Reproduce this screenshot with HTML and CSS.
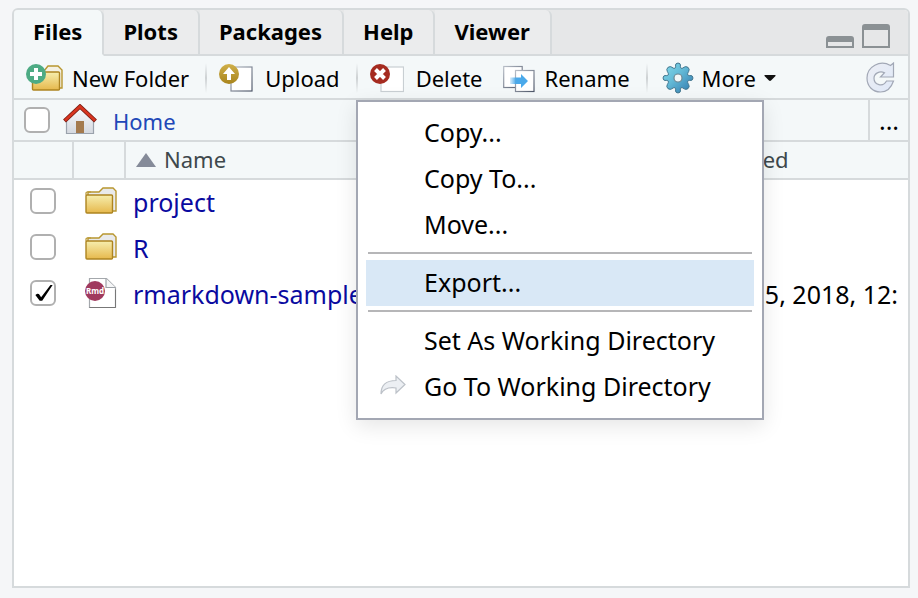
FILE: index.html
```html
<!DOCTYPE html>
<html lang="en">
<head>
<meta charset="utf-8">
<title>Files</title>
<link rel="stylesheet" href="styles.css">
</head>
<body>
<svg class="defs" aria-hidden="true">
  <defs>
    <linearGradient id="gold" x1="0" y1="0" x2="0" y2="1"><stop offset="0" stop-color="#f6eeae"/><stop offset="1" stop-color="#e6b84c"/></linearGradient>
    <linearGradient id="bronze" x1="0" y1="0" x2="0" y2="1"><stop offset="0" stop-color="#d0b04a"/><stop offset="1" stop-color="#a8841c"/></linearGradient>
    <linearGradient id="page" x1="0" y1="0" x2="1" y2="1"><stop offset="0" stop-color="#b9bfc8"/><stop offset="1" stop-color="#4d5668"/></linearGradient>
    <linearGradient id="blue" x1="0" y1="0" x2="1" y2="0"><stop offset="0" stop-color="#4aa9ea" stop-opacity=".2"/><stop offset=".35" stop-color="#4aa9ea"/></linearGradient>
    <linearGradient id="cog" x1="0" y1="0" x2="1" y2="1"><stop offset="0" stop-color="#85dcec"/><stop offset=".45" stop-color="#63b9d6"/><stop offset="1" stop-color="#2f77ad"/></linearGradient>
    <linearGradient id="wall" x1="0" y1="0" x2="0" y2="1"><stop offset="0" stop-color="#fafafc"/><stop offset="1" stop-color="#d5d9e0"/></linearGradient>
    <linearGradient id="ice" x1="0" y1="0" x2="1" y2="1"><stop offset="0" stop-color="#eceef4"/><stop offset="1" stop-color="#dfe8f8"/></linearGradient>
    <symbol id="folder" viewBox="0 0 32 28">
      <path d="M3 8V5h11l4-4h10l3 3v20h-4" fill="#e9eaec" stroke="#b8962f" stroke-width="1.4"/>
      <path d="M1.700 8.300Q1 8.300 1 7.500V6q0-1 1-1h4" fill="none" stroke="#b8962f" stroke-width="1.200"/>
      <rect x="1" y="8" width="26.500" height="18" rx="1" fill="url(#gold)" stroke="#ad8420" stroke-width="1.400"/>
    </symbol>
  </defs>
</svg>
<main class="panel">
  <nav class="tabs">
    <button class="tab active">Files</button>
    <button class="tab">Plots</button>
    <button class="tab">Packages</button>
    <button class="tab">Help</button>
    <button class="tab">Viewer</button>
    <span class="spacer"></span>
    <button class="window" aria-label="Minimize"><svg width="28" height="24" viewBox="0 0 28 24"><path d="M0 24V15q0-3 3-3h22q3 0 3 3v9zM2 18v4h24v-4z" fill="#8b9194" fill-rule="evenodd"/></svg></button>
    <button class="window" aria-label="Maximize"><svg width="28" height="24" viewBox="0 0 28 24"><path d="M0 24V3q0-3 3-3h22q3 0 3 3v21zM2 6v16h24V6z" fill="#8b9194" fill-rule="evenodd"/></svg></button>
  </nav>

  <div class="toolbar">
    <button class="tool new"><svg width="38" height="30" viewBox="0 0 38 30">
      <path d="M18 8l4-5h10l4 4v18h-5" fill="#f4f1e3" stroke="#b8962f" stroke-width="1.400"/>
      <rect x="6.500" y="9" width="27" height="18" rx="1" fill="url(#gold)" stroke="#ad8420" stroke-width="1.400"/>
      <circle cx="10" cy="11" r="10" fill="#4dab84"/><path d="M8 5h4v4h4v4h-4v4H8v-4H4V9h4z" fill="#fff"/></svg>New Folder</button>
    <span class="divider"></span>
    <button class="tool upload"><svg width="34" height="30" viewBox="0 0 34 30">
      <rect x="12" y="4" width="21" height="24" fill="#fff" stroke="url(#page)" stroke-width="1.200"/>
      <circle cx="10" cy="11" r="10" fill="url(#bronze)"/><path d="M10 4l6 7h-4v6H8v-6H4z" fill="#fff"/></svg>Upload</button>
    <span class="divider"></span>
    <button class="tool delete"><svg width="34" height="30" viewBox="0 0 34 30">
      <rect x="11" y="4" width="22.500" height="24.500" fill="#fff" stroke="#c9cfd3" stroke-width="1.200"/>
      <circle cx="10" cy="11" r="10" fill="#a52b20"/><path d="M5.500 6.500l9 9m0-9l-9 9" stroke="#fff" stroke-width="4"/></svg>Delete</button>
    <button class="tool rename"><svg width="32" height="30" viewBox="0 0 32 30">
      <rect x=".7" y="3.500" width="18.500" height="21" fill="#fff" stroke="url(#page)" stroke-width="1.200"/>
      <rect x="12.500" y="7.500" width="18.500" height="21" fill="#fff" stroke="url(#page)" stroke-width="1.200"/>
      <path d="M7 14.500h11V11l7 7-7 7v-4H7z" fill="url(#blue)"/></svg>Rename</button>
    <span class="divider"></span>
    <button class="tool more" aria-haspopup="menu" aria-expanded="true"><svg width="32" height="32" viewBox="0 0 32 32">
      <path d="M13 6.200C14.500 5 12.800 3.500 14 1.800Q16 .2 18 1.800C19.200 3.500 17.500 5 19 6.200C20.800 7 21 5.200 23.800 4.600Q26.600 4.800 27.200 7.400C26.800 10.800 25 10.800 25.800 13C27 14.500 28.500 12.800 30.200 14Q31.800 16 30.200 18C28.500 19.200 27 17.500 25.800 19C25 21.200 26.800 21.200 27.200 24.600Q26.600 27.200 23.800 27.400C21 26.800 20.800 25 19 25.800C17.500 27 19.200 28.500 18 30.200Q16 31.800 14 30.200C12.800 28.500 14.500 27 13 25.800C11.200 25 11 26.800 8.200 27.400Q5.400 27.200 4.800 24.600C5.200 21.200 7 21.200 6.200 19C5 17.500 3.500 19.200 1.800 18Q.2 16 1.800 14C3.500 12.800 5 14.500 6.200 13C7 10.800 5.200 10.800 4.800 7.400Q5.400 4.800 8.200 4.600C11 5.200 11.200 7 13 6.200Z" fill="url(#cog)" stroke="#42768e" stroke-width="1"/>
      <circle cx="16" cy="16" r="4" fill="#f2f7f8" stroke="#6c8793" stroke-width="1.200"/></svg>More<svg width="12" height="6" viewBox="0 0 12 6"><path d="M1 0h10q1 0 .5 1L7 5.500q-1 .8-2 0L.5 1Q0 0 1 0z" fill="#111"/></svg></button>
    <span class="spacer"></span>
    <button class="tool" aria-label="Refresh"><svg width="30" height="32" viewBox="0 0 30 32">
      <path d="M24.500 3.500L27.500 1V15H14.500L18.500 10.700C13.500 8.500 8 11.500 8 16.200C8 23 17 25.500 20.500 19H27.500C25 26.500 21 30 14.500 30C6.500 30 1 24 1 16C1 4.500 14-2.500 24.500 3.500Z" fill="url(#ice)" stroke="#a2a8b6" stroke-width="1.200"/></svg></button>
  </div>

  <div class="path">
    <input type="checkbox" aria-label="Select all files">
    <svg class="house" width="34" height="32" viewBox="0 0 34 32">
      <path d="M3 15L17 3l14 12v14H3z" fill="url(#wall)"/><path d="M3.500 17v12.500h27V17" fill="none" stroke="#9aa2ac" stroke-width="1.200"/>
      <rect x="13" y="17" width="8" height="12" fill="#a47a4e"/>
      <path d="M1.500 17L17 2.500 32.500 17" fill="none" stroke="#7b1f15" stroke-width="4.200"/><path d="M2 16.500L17 2.500l15 14" fill="none" stroke="#d8341f" stroke-width="2.400"/></svg>
    <a href="#home">Home</a>
    <span class="spacer"></span>
    <button class="browse" aria-label="Go to directory">...</button>
  </div>

  <table class="files">
    <colgroup><col class="c-check"><col class="c-icon"><col><col class="c-date"></colgroup>
    <thead><tr><th></th><th></th><th><svg class="sort" width="20" height="14" viewBox="0 0 20 14"><path d="M10 0l10 14H0z" fill="#858b99"/></svg>Name</th><th>Modified</th></tr></thead>
    <tbody>
      <tr><td><input type="checkbox" aria-label="Select project"></td><td><svg width="32" height="28"><use href="#folder"/></svg></td><td><a href="#project">project</a></td><td></td></tr>
      <tr><td><input type="checkbox" aria-label="Select R"></td><td><svg width="32" height="28"><use href="#folder"/></svg></td><td><a href="#r">R</a></td><td></td></tr>
      <tr><td><input type="checkbox" checked aria-label="Select rmarkdown-sample.Rmd"></td><td><svg width="32" height="32" viewBox="0 0 32 32">
        <path d="M4.500 1.500h17l9 9v20h-26z" fill="#fff" stroke="#a4a8ac" stroke-width="1.200"/><path d="M21 1.500v9h9.500" fill="#f5f6f7" stroke="#9da2a7" stroke-width="1.200"/><path d="M4.500 30.500h26v-18" fill="none" stroke="#777" stroke-width="1"/>
        <circle cx="10" cy="14" r="10" fill="#a03a5e"/><text x="10" y="17" class="badge">Rmd</text></svg></td><td><a href="#rmd">rmarkdown-sample.Rmd</a></td><td>Mar 25, 2018, 12:</td></tr>
    </tbody>
  </table>

  <div class="menu" role="menu">
    <button role="menuitem">Copy...</button>
    <button role="menuitem">Copy To...</button>
    <button role="menuitem">Move...</button>
    <hr>
    <button role="menuitem" class="current">Export...</button>
    <hr>
    <button role="menuitem">Set As Working Directory</button>
    <button role="menuitem"><svg width="26" height="20" viewBox="0 0 26 20"><path d="M1 19C1 10 6 5.500 16 5.500V1l9 8.500L16 18v-5C9 12 4 13 1 19z" fill="#eceff3" stroke="#bcc1c8" stroke-width="1.200"/></svg>Go To Working Directory</button>
  </div>
</main>
</body>
</html>
```
FILE: styles.css
```css
* { box-sizing: border-box; }

body {
  margin: 0;
  padding: 8px 8px 10px 12px;
  height: 100vh;
  background: #f5f6f8;
  color: #000;
  font: 25px/30px "Noto Sans", sans-serif;
}

button {
  margin: 0;
  padding: 0;
  border: 0;
  background: none;
  color: inherit;
  font: inherit;
}

a { text-decoration: none; }
svg { flex: none; display: block; }
.defs { position: absolute; width: 0; height: 0; }
.spacer { flex: 1; }

.panel {
  position: relative;
  height: 100%;
  overflow: hidden;
  border: 2px solid #d6dadc;
  border-radius: 6px 6px 0 0;
  background: #fff;
}

.tabs {
  display: flex;
  height: 46px;
  padding-right: 18px;
  background: #e6e7e8;
  box-shadow: inset 0 -2px #d6dadc;
}

.tab {
  padding: 0 20px 2px 19px;
  border-right: 2px solid #d6dadc;
  border-bottom: 2px solid #d6dadc;
  border-radius: 0 6px 0 0;
  background: #ebeced;
  font-size: 22px;
  font-weight: 700;
}

.tab.active { background: #f4f8f9; border-bottom-color: #f4f8f9; }
.window { align-self: center; padding-top: 6px; }
.window + .window { margin-left: 8px; }

.toolbar {
  display: flex;
  align-items: center;
  height: 44px;
  padding: 2px 12px 0;
  border-bottom: 2px solid #d6dadc;
  background: #f4f8f9;
}

.tool { display: flex; align-items: center; gap: 8px; white-space: nowrap; font-size: 22px; }
.upload, .delete { gap: 12px; }
.rename { gap: 10px; margin-left: 20px; }
.more { margin-left: 2px; }
.divider {
  width: 2px;
  height: 30px;
  margin: 0 12px 0 16px;
  background: linear-gradient(#f4f8f9, #cdd1d3, #f4f8f9);
}

.path {
  display: flex;
  align-items: center;
  height: 42px;
  padding-left: 10px;
  border-bottom: 2px solid #d6dadc;
  background: #f4f8f9;
}
.path a { padding-top: 2px; color: #2148b8; font-size: 22px; }
.house { margin: 0 16px 0 13px; }
.browse { align-self: stretch; width: 40px; border-left: 2px solid #d6dadc; font-size: 25px; }

input[type="checkbox"] {
  appearance: none;
  display: block;
  flex: none;
  width: 26px;
  height: 26px;
  margin: 0;
  border: 2px solid #b0b0b0;
  border-radius: 6px;
  background: #fff;
}
input:checked::before {
  content: "";
  display: block;
  width: 18px;
  height: 16px;
  margin: 3px;
  background: #000;
  clip-path: polygon(2% 62%, 12% 54%, 22% 56%, 34% 76%, 86% 0, 98% 0, 40% 98%, 26% 98%);
}

.files { width: 100%; table-layout: fixed; border-collapse: separate; border-spacing: 0; }
.c-check { width: 60px; }
.c-icon { width: 52px; }
.c-date { width: 211px; }
.files th {
  height: 38px;
  padding: 0 0 2px;
  border-bottom: 2px solid #d6dadc;
  background: #f4f8f9;
  color: #3e484c;
  font-size: 22px;
  font-weight: 400;
  text-align: left;
}
.files th:nth-child(-n+2) { border-right: 2px solid #d6dadc; }
.files th:nth-child(3) { padding-left: 10px; }
.sort { display: inline-block; margin-right: 8px; vertical-align: 1px; }
.files td { height: 46px; padding: 0 0 2px; white-space: nowrap; overflow: hidden; }
.files td:nth-child(1) { padding-left: 16px; padding-bottom: 4px; }
.files td:nth-child(2) { padding-left: 11px; padding-bottom: 4px; }
.files td:nth-child(3) { padding-left: 7px; }
.files a { color: #0a0aa0; }
.badge { fill: #fff; font: 700 8px "Noto Sans", sans-serif; text-anchor: middle; }

.menu {
  position: absolute;
  top: 90px;
  left: 342px;
  width: 408px;
  padding: 8px;
  border: 2px solid #a3a7b3;
  background: #fff;
  box-shadow: 0 6px 20px rgba(0, 0, 0, .1);
}
.menu button {
  display: flex;
  align-items: center;
  width: 100%;
  height: 46px;
  padding: 0 0 2px 58px;
  white-space: nowrap;
}
.menu button svg { margin: 0 18px 2px -44px; }
.menu .current { background: #d9e8f6; }
.menu hr { height: 2px; margin: 4px 2px 6px; border: 0; background: #b6b6b8; }
```
